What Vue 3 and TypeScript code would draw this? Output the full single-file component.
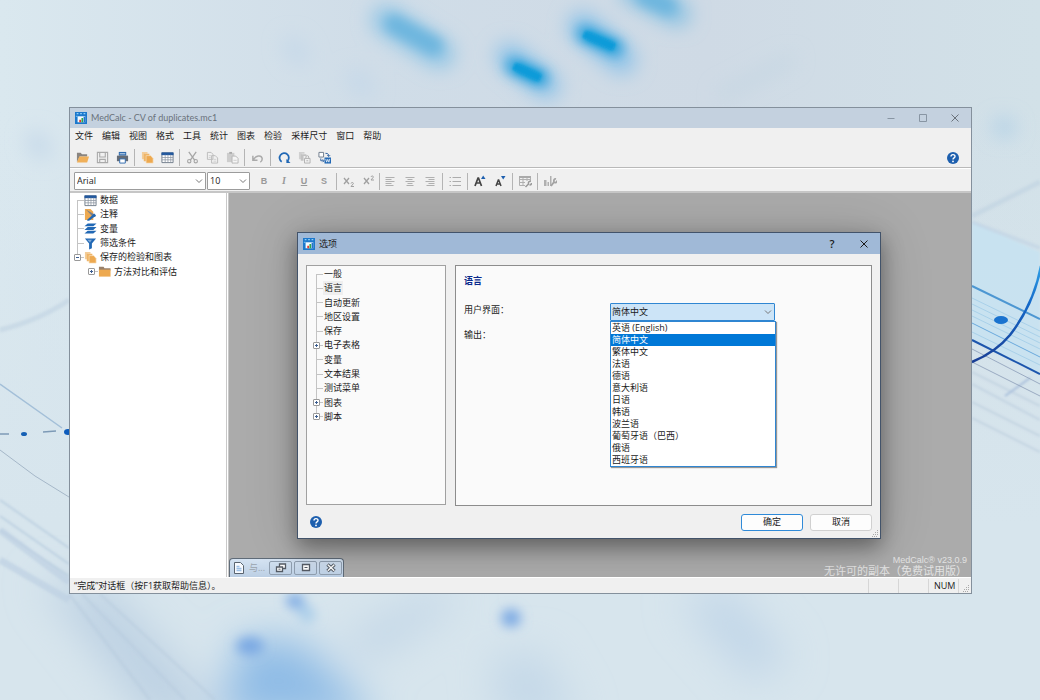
<script setup lang="ts">
import { ref } from 'vue'

type ToolItem = { id?: string; label?: string; sep?: 'wide' | 'thin' | 'mid' }
type TreeItem = { label: string; icon?: string; box?: 'plus' | 'minus'; child?: boolean; current?: boolean }

const menus = ['文件', '编辑', '视图', '格式', '工具', '统计', '图表', '检验', '采样尺寸', '窗口', '帮助']

const tools: ToolItem[] = [
  { id: 'open', label: '打开' },
  { id: 'save', label: '保存' },
  { id: 'print', label: '打印' },
  { sep: 'mid' },
  { id: 'pages', label: '内容' },
  { id: 'grid', label: '数据' },
  { sep: 'mid' },
  { id: 'cut', label: '剪切' },
  { id: 'copy', label: '复制' },
  { id: 'paste', label: '粘贴' },
  { sep: 'mid' },
  { id: 'undo', label: '撤消' },
  { sep: 'wide' },
  { id: 'refresh', label: '重新计算' },
  { id: 'locked', label: '保存结果' },
  { id: 'word', label: '导出' },
]

const formats: ToolItem[] = [
  { id: 'bold', label: '粗体' },
  { id: 'italic', label: '斜体' },
  { id: 'underline', label: '下划线' },
  { id: 'strike', label: '删除线' },
  { sep: 'mid' },
  { id: 'sub', label: '下标' },
  { id: 'sup', label: '上标' },
  { sep: 'thin' },
  { id: 'left', label: '左对齐' },
  { id: 'center', label: '居中' },
  { id: 'right', label: '右对齐' },
  { sep: 'mid' },
  { id: 'list', label: '列表' },
  { sep: 'mid' },
  { id: 'bigger', label: '增大字号' },
  { id: 'smaller', label: '减小字号' },
  { sep: 'mid' },
  { id: 'gridtool', label: '表格格式' },
  { sep: 'mid' },
  { id: 'charttool', label: '图表格式' },
]

const glyphs: Record<string, string> = { bold: 'B', italic: 'I', underline: 'U', strike: 'S' }

const contents: TreeItem[] = [
  { label: '数据', icon: 'grid' },
  { label: '注释', icon: 'note' },
  { label: '变量', icon: 'layers' },
  { label: '筛选条件', icon: 'funnel' },
  { label: '保存的检验和图表', icon: 'pages', box: 'minus' },
  { label: '方法对比和评估', icon: 'folder', box: 'plus', child: true },
]

const sections: TreeItem[] = [
  { label: '一般' },
  { label: '语言', current: true },
  { label: '自动更新' },
  { label: '地区设置' },
  { label: '保存' },
  { label: '电子表格', box: 'plus' },
  { label: '变量' },
  { label: '文本结果' },
  { label: '测试菜单' },
  { label: '图表', box: 'plus' },
  { label: '脚本', box: 'plus' },
]

const languages = ['英语 (English)', '简体中文', '繁体中文', '法语', '德语', '意大利语', '日语', '韩语', '波兰语', '葡萄牙语（巴西）', '俄语', '西班牙语']
const language = ref('简体中文')
const output = ref('简体中文')
</script>

<template>
  <div class="scene">
    <svg class="backdrop" viewBox="0 0 1040 700" preserveAspectRatio="xMidYMid slice" aria-hidden="true">
      <defs>
        <filter id="b3" filterUnits="userSpaceOnUse" x="-60" y="-60" width="1160" height="820"><feGaussianBlur stdDeviation="3" /></filter>
        <filter id="b6" filterUnits="userSpaceOnUse" x="-60" y="-60" width="1160" height="820"><feGaussianBlur stdDeviation="6" /></filter>
        <filter id="b9" filterUnits="userSpaceOnUse" x="-60" y="-60" width="1160" height="820"><feGaussianBlur stdDeviation="10" /></filter>
        <filter id="b20" filterUnits="userSpaceOnUse" x="-60" y="-60" width="1160" height="820"><feGaussianBlur stdDeviation="20" /></filter>
        <filter id="b1" filterUnits="userSpaceOnUse" x="-60" y="-60" width="1160" height="820"><feGaussianBlur stdDeviation="1" /></filter>
        <linearGradient id="sky" x1="0" y1="0" x2="1" y2="0">
          <stop offset="0" stop-color="#dae8ef" /><stop offset=".35" stop-color="#d0dde8" />
          <stop offset=".68" stop-color="#cfdae5" /><stop offset="1" stop-color="#d2e1e8" />
        </linearGradient>
        <linearGradient id="floor" x1="0" y1="0" x2="0" y2="1">
          <stop offset=".15" stop-color="#d8e6ee" stop-opacity="0" /><stop offset=".75" stop-color="#d7e5ed" />
        </linearGradient>
        <linearGradient id="curve" x1="0" y1="1" x2="0" y2="0">
          <stop offset="0" stop-color="#1a3f96" /><stop offset=".6" stop-color="#1468c8" /><stop offset="1" stop-color="#2fa0e6" />
        </linearGradient>
      </defs>
      <rect width="1040" height="700" fill="url(#sky)" />
      <rect width="1040" height="700" fill="url(#floor)" />
      <g filter="url(#b9)" stroke-linecap="round" fill="none">
        <path d="M386 20L440 54" stroke="#8ec4e5" stroke-width="28" />
        <path d="M509 56L547 86" stroke="#8fc3e8" stroke-width="26" />
        <path d="M582 26L622 60" stroke="#8fc3e8" stroke-width="28" />
        <path d="M632-10L678 14" stroke="#85c0e2" stroke-width="24" />
        <path d="M292 46L300 56M355 78L365 88M35 140L42 150" stroke="#c5d8e9" stroke-width="18" />
        <path d="M722 95L790 60" stroke="#c3d5e2" stroke-width="9" />
        <path d="M1002 127L1006 128" stroke="#a8cce6" stroke-width="16" />
      </g>
      <g filter="url(#b6)" stroke-linecap="round">
        <path d="M514 66L540 78M585 34L615 48" stroke="#3aa6dc" stroke-width="18" />
        <path d="M394 24L434 46M645-4L668 6" stroke="#6cb5de" stroke-width="18" />
      </g>
      <path d="M516 67L540 78M586 35L614 47" stroke="#0a9bd9" stroke-width="9" filter="url(#b3)" />
      <path d="M514 66L540 78M584 34L614 47" stroke="#0a9bd9" stroke-width="7" filter="url(#b1)" />
      <g filter="url(#b20)">
        <path d="M220 720L240 640L300 640L380 720z" fill="#8fbce6" />
        <path d="M40 580L110 590L230 720L150 720z" fill="#bdd1e3" />
        <path d="M680 600L730 590L790 660L750 680z" fill="#c1d6e8" />
        <path d="M340 640L440 590L460 600L370 660z" fill="#c0d4e6" />
        <path d="M490 660L540 650L580 720L500 720z" fill="#c4d8e8" />
      </g>
      <g filter="url(#b6)" fill="#78a7e3">
        <ellipse cx="250" cy="646" rx="14" ry="9" /><ellipse cx="295" cy="601" rx="9" ry="7" />
        <ellipse cx="511" cy="618" rx="10" ry="9" />
        <path d="M300 606L312 620" stroke="#a9cdea" stroke-width="14" />
      </g>
      <g filter="url(#b1)" fill="none">
        <path d="M972 222L1040 252V374L972 340z" fill="#c4e1f2" opacity=".75" />
        <path d="M972 216L1040 182M0 330Q40 320 69 300" stroke="#bccfe0" stroke-width="5" opacity=".5" />
        <path d="M972 222L1040 248" stroke="#c0d2e4" stroke-width="4" opacity=".6" />
        <path d="M0 500L69 548M0 516L69 564M0 530L69 576" stroke="#aec5da" stroke-width="2" opacity=".6" />
        <path d="M69 594L150 700M82 594L185 700M100 594L215 700" stroke="#b4c9dc" stroke-width="3" opacity=".4" />
        <path d="M0 530L69 582M0 560L69 600" stroke="#bdd0e2" stroke-width="7" opacity=".7" />
        <path d="M972 372L1040 406M972 384L1040 420M972 402L1040 436M972 418L1040 452" stroke="#b6c7dc" stroke-width="2" opacity=".5" />
        <path d="M1005 396L1030 378" stroke="#a9bfdb" stroke-width="2" />
      </g>
      <g fill="none">
        <path d="M972 298L1040 331M972 304L1040 337M972 310L1040 343M972 316L1040 349M972 332L1040 365" stroke="#94c4e4" opacity=".6" />
        <path d="M972 323L1040 357" stroke="#6aa9dc" />
        <path d="M972 286L1040 319" stroke="#4d97d2" stroke-width="2" />
        <path d="M972 340L1040 374" stroke="#1c55ad" stroke-width="2" />
        <path d="M972 349L1040 384M972 362L1040 396" stroke="#8b9cb8" opacity=".8" />
        <path d="M972 362Q996 352 1010 335Q1034 304 1041 266" stroke="url(#curve)" stroke-width="2.500" />
        <ellipse cx="1001" cy="320" rx="7" ry="4" fill="#1a73cf" />
        <path d="M0 384L62 428" stroke="#a3bfd8" stroke-width="1.500" />
        <path d="M0 450L35 476L69 497" stroke="#a5b7c8" />
        <path d="M0 434H9M43 432L56 431" stroke="#7d9ab6" stroke-width="1.500" />
        <ellipse cx="24" cy="434" rx="3" ry="2" fill="#1660b4" /><ellipse cx="68" cy="432" rx="4" ry="3" fill="#0d5cbc" />
      </g>
    </svg>

    <svg class="symbols" aria-hidden="true">
      <defs>
        <symbol id="i-app" viewBox="0 0 14 14">
          <path d="M0 0h14v14H0z" fill="#1c78cc" /><path d="M2 2h2M6 2h2M10 2h2" stroke="#8fd0fa" stroke-width="1.500" />
          <path d="M3 5h9v7H3z" fill="#f4fbff" /><path d="M1 5h2" stroke="#8fd0fa" />
          <path d="M5 9h2v3H5z" fill="#e23a2e" /><path d="M7.500 7h2v5h-2z" fill="#2fa84a" /><path d="M10 5.500h2V12h-2z" fill="#2374c9" />
        </symbol>
        <symbol id="i-open" viewBox="0 0 14 14"><path d="M1 12V2h4l1.500 1.500H12V6H4z" fill="#8a8580" /><path d="M3.500 6H14l-2 6.500H1z" fill="#f0b05a" /></symbol>
        <symbol id="i-save" viewBox="0 0 14 14"><path d="M1.500 1.500h11v11h-11zM4 1.500v5h6v-5M4 12.500V9h6v3.500" fill="none" stroke="#aaa" stroke-width="1.200" /></symbol>
        <symbol id="i-print" viewBox="0 0 14 14"><path d="M3 1h8v4H3z" fill="#2d69ad" /><path d="M1 5h12v6H1z" fill="#646b75" /><path d="M4 8.500h6V13H4z" fill="#fff" stroke="#2d69ad" /><path d="M4 3h6" stroke="#dce9f6" /></symbol>
        <symbol id="i-pages" viewBox="0 0 14 14"><path d="M1 1h6v2H4v6H1z" fill="#f3cd99" /><path d="M3 3h6v2H6v6H3z" fill="#efb567" /><path d="M5.500 5h5L13 8v5H5.500z" fill="#eda950" stroke="#f8ddb6" stroke-width=".7" /></symbol>
        <symbol id="i-grid" viewBox="0 0 14 14"><path d="M1 2h12v10.500H1z" fill="#fff" stroke="#6e7a88" /><path d="M.5 1.500h13v3H.5z" fill="#22589e" /><path d="M1 7h12M1 9.500h12M4.500 4v8M7.500 4v8M10.500 4v8" stroke="#8b95a1" stroke-width=".8" /></symbol>
        <symbol id="i-cut" viewBox="0 0 14 14"><path d="M3 1l6.500 9M11 1L4.500 10" fill="none" stroke="#a6a6a6" stroke-width="1.400" /><circle cx="3.500" cy="11" r="1.800" fill="none" stroke="#a6a6a6" stroke-width="1.200" /><circle cx="10.500" cy="11" r="1.800" fill="none" stroke="#a6a6a6" stroke-width="1.200" /></symbol>
        <symbol id="i-copy" viewBox="0 0 14 14"><path d="M1.500 1.500h4l2 2V9h-6zM6 5h4l2.500 2.500V13H6z" fill="#f0f0f0" stroke="#bbb" /><path d="M3 5h3M3 7h2M8 9h3M8 11h3" stroke="#d0d0d0" /></symbol>
        <symbol id="i-paste" viewBox="0 0 14 14"><path d="M1 2h8v10H1z" fill="#cdcdcd" /><path d="M3.500 1h3v2h-3z" fill="#aaa" /><path d="M6.500 5.500h4l2.500 2.500v5H6.500z" fill="#f5f5f5" stroke="#b5b5b5" /><path d="M8 10h3.500" stroke="#ccc" /></symbol>
        <symbol id="i-undo" viewBox="0 0 14 14"><path d="M2 5v5h5M2.500 9.500C5 5 11 3.500 12 8c.2 2-.8 3.500-2 4" fill="none" stroke="#aaa" stroke-width="1.600" /></symbol>
        <symbol id="i-refresh" viewBox="0 0 14 14"><path d="M4 11.500A5 5 0 1 1 10 11" fill="none" stroke="#2168b5" stroke-width="1.900" /><path d="M9 8.500V13h4.500z" fill="#2168b5" /></symbol>
        <symbol id="i-locked" viewBox="0 0 14 14"><path d="M1 1h6v2H4v6H1z" fill="#d0d0d0" /><path d="M3 3.500h6v2H6v5H3z" fill="#c2c2c2" /><path d="M7 8h6v5H7z" fill="#f0f0f0" stroke="#b0b0b0" /><path d="M8.500 8V6.500a1.500 1.500 0 0 1 3 0V8M9 10.500h2" fill="none" stroke="#b0b0b0" /></symbol>
        <symbol id="i-word" viewBox="0 0 14 14"><path d="M1 1.500h5v5H1z" fill="#fff" stroke="#6b7889" /><path d="M8 2.500c3 0 3.500 1 3.500 3M10 4.500l1.500 1.500L13 4.500M3 8v2.500h3M5 9l1.500 1.500L5 12" fill="none" stroke="#2a5e9e" /><path d="M7 7h7v6.500H7z" fill="#2168b5" /><path d="M8.300 8.500l1 3.500 1.200-3 1.200 3 1-3.500" fill="none" stroke="#fff" stroke-width=".8" /></symbol>
        <symbol id="i-help" viewBox="0 0 14 14"><circle cx="7" cy="7" r="6" fill="#1d5fae" /><path d="M5 5.600c0-2.600 4-2.600 4-.2 0 1.500-2 1.400-2 3.100" fill="none" stroke="#fff" stroke-width="1.400" /><circle cx="7" cy="10.400" r=".9" fill="#fff" /></symbol>
        <symbol id="i-sub" viewBox="0 0 14 14"><path d="M2 4l5 6M7 4l-5 6" stroke="#a0a0a0" stroke-width="1.300" /><path d="M9 9.500c.3-1.500 2.700-1.200 2.300.2L9 12.500h3" fill="none" stroke="#a0a0a0" /></symbol>
        <symbol id="i-sup" viewBox="0 0 14 14"><path d="M2 4l5 6M7 4l-5 6" stroke="#a0a0a0" stroke-width="1.300" /><path d="M9 3c.3-1.500 2.700-1.200 2.300.2L9 6h3" fill="none" stroke="#a0a0a0" /></symbol>
        <symbol id="i-left" viewBox="0 0 14 14"><path d="M2.500 3.500h9M2.500 5.500h6M2.500 7.500h9M2.500 9.500h6M2.500 11.500h8" stroke="#b0b0b0" /></symbol>
        <symbol id="i-center" viewBox="0 0 14 14"><path d="M2.500 3.500h9M4.500 5.500h5M2.500 7.500h9M4.500 9.500h5M3.500 11.500h7" stroke="#b0b0b0" /></symbol>
        <symbol id="i-right" viewBox="0 0 14 14"><path d="M2.500 3.500h9M5.500 5.500h6M2.500 7.500h9M5.500 9.500h6M3.500 11.500h8" stroke="#b0b0b0" /></symbol>
        <symbol id="i-list" viewBox="0 0 14 14"><path d="M4.500 3.500H13M4.500 7.500H13M4.500 11.500H13M1.500 3.500h1.500M1.500 7.500h1.500M1.500 11.500h1.500" stroke="#acacac" stroke-width="1.200" /></symbol>
        <symbol id="i-bigger" viewBox="0 0 14 14"><path d="M2 12L5 4h.5l3 8M3 9h4.500" fill="none" stroke="#444" stroke-width="1.700" /><path d="M8 5l2.200-3.500L12.500 5z" fill="#1d5fae" /></symbol>
        <symbol id="i-smaller" viewBox="0 0 14 14"><path d="M3 12l2.300-6h.4L8 12M4 10h3.500" fill="none" stroke="#444" stroke-width="1.500" /><path d="M8 2l2.200 3.500L12.500 2z" fill="#1d5fae" /></symbol>
        <symbol id="i-gridtool" viewBox="0 0 14 14"><path d="M1.500 2.500h11V8M1.500 2.500v9H7M1.500 5.500h11M1.500 8.500H7M5 3v8M9 3v4" fill="none" stroke="#b0b0b0" /><path d="M1 2h12v2H1z" fill="#aaa" /><path d="M7.500 13l3-3c-.5-2 1-3 2-2.500M13.500 9c0 1.500-1 2-2 2" fill="none" stroke="#999" stroke-width="1.500" /></symbol>
        <symbol id="i-charttool" viewBox="0 0 14 14"><path d="M1 6h2.500v6H1zM4.500 8H6v4H4.500zM7 2h1.500v10H7z" fill="#b0b0b0" /><path d="M8 12l3-4c-.5-2 .5-3.500 2-3M14 6.500c0 1.500-1 2.500-2.500 2" fill="none" stroke="#a3a3a3" stroke-width="1.800" /></symbol>
        <symbol id="i-note" viewBox="0 0 14 14"><path d="M1 1h6l3 3v9H1z" fill="#eda950" /><path d="M2 1.500l9.500 5.500 1 2.500-2.500.5z" fill="#7c7f86" /><path d="M4 12l7-6 2 2-7 5.500-2.500.5z" fill="#2168b5" /></symbol>
        <symbol id="i-layers" viewBox="0 0 14 14"><path d="M4 1.500h9.500L10 4.500H.5zM4 5.500h9.500L10 8.500H.5zM4 9.500h9.500L10 12.500H.5z" fill="#2168b5" /></symbol>
        <symbol id="i-funnel" viewBox="0 0 14 14"><path d="M1 1.500h12L8.500 7v5l-3 1.500V7z" fill="#2168b5" /><path d="M3.500 3h5L6.500 6z" fill="#7fa9d6" /></symbol>
        <symbol id="i-folder" viewBox="0 0 14 14"><path d="M1 2h5l1 1.500h6.500V6H1z" fill="#98806a" /><path d="M1 5h12.500v7.500H1z" fill="#eda950" /></symbol>
        <symbol id="i-down" viewBox="0 0 10 10"><path d="M2 3.500l3 3 3-3" fill="none" stroke="#777" /></symbol>
        <symbol id="i-min" viewBox="0 0 10 10"><path d="M1.500 5.500h7" stroke="#8895a3" /></symbol>
        <symbol id="i-max" viewBox="0 0 10 10"><path d="M1.500 1.500h7v7h-7z" fill="none" stroke="#8895a3" /></symbol>
        <symbol id="i-close" viewBox="0 0 10 10"><path d="M1.500 1.500l7 7M8.500 1.500l-7 7" stroke="currentColor" /></symbol>
        <symbol id="i-grip" viewBox="0 0 8 8"><path d="M6 1h1v1H6zM4 3h1v1H4zM6 3h1v1H6zM2 5h1v1H2zM4 5h1v1H4zM6 5h1v1H6zM1 7h1v1H1zM3 7h1v1H3zM5 7h1v1H5z" fill="#aaa" /></symbol>
        <symbol id="i-doc" viewBox="0 0 12 12"><path d="M1.500.5h6L10.500 3.500v8h-9z" fill="#f8fbff" stroke="#5a6470" /><path d="M3.500 4.500h3M3.500 6.500h5M3.500 8.500h5" stroke="#9dc0e6" stroke-width="1.400" /></symbol>
        <symbol id="i-restore" viewBox="0 0 12 12"><path d="M4.500 2h6v4.500h-6z" fill="#fff" stroke="#555c66" stroke-width="1.300" /><path d="M1.500 5h6v4.500h-6z" fill="#fff" stroke="#555c66" stroke-width="1.300" /><path d="M3.500 7.200h2" stroke="#555c66" /></symbol>
        <symbol id="i-tabmax" viewBox="0 0 12 12"><path d="M2.500 2.500h7v6h-7z" fill="#fff" stroke="#555c66" stroke-width="1.300" /><path d="M4.500 5.500h3" stroke="#555c66" /></symbol>
        <symbol id="i-tabclose" viewBox="0 0 12 12"><path d="M2.500 2.500l7 6.500M9.500 2.500l-7 6.500" stroke="#555c66" stroke-width="3.400" /><path d="M2.800 2.800l6.400 6M9.200 2.800l-6.400 6" stroke="#fff" stroke-width="1.400" /></symbol>
      </defs>
    </svg>

    <main class="window">
      <header class="titlebar">
        <svg class="logo"><use href="#i-app" /></svg>
        <h1>MedCalc - CV of duplicates.mc1</h1>
        <button class="caption" aria-label="最小化"><svg class="s10"><use href="#i-min" /></svg></button>
        <button class="caption" aria-label="最大化"><svg class="s10"><use href="#i-max" /></svg></button>
        <button class="caption" aria-label="关闭"><svg class="s10"><use href="#i-close" /></svg></button>
      </header>

      <nav class="menubar">
        <button v-for="m in menus" :key="m">{{ m }}</button>
      </nav>

      <div class="toolbar">
        <template v-for="(t, i) in tools" :key="i">
          <span v-if="t.sep" class="sep" :class="t.sep"></span>
          <button v-else class="tool" :aria-label="t.label"><svg class="s13"><use :href="'#i-' + t.id" /></svg></button>
        </template>
        <button class="tool help" aria-label="帮助"><svg class="s14"><use href="#i-help" /></svg></button>
      </div>

      <div class="formatbar">
        <span class="combo font">
          <select aria-label="字体"><option>Arial</option></select>
          <svg class="s10"><use href="#i-down" /></svg>
        </span>
        <span class="combo size">
          <select aria-label="字号"><option>10</option></select>
          <svg class="s10"><use href="#i-down" /></svg>
        </span>
        <template v-for="(t, i) in formats" :key="i">
          <span v-if="t.sep" class="sep" :class="t.sep"></span>
          <button v-else class="tool" :aria-label="t.label">
            <span v-if="t.id && glyphs[t.id]" class="glyph" :class="t.id">{{ glyphs[t.id] }}</span>
            <svg v-else class="s14"><use :href="'#i-' + t.id" /></svg>
          </button>
        </template>
      </div>

      <div class="body">
        <aside class="sidebar">
          <ul class="tree contents">
            <li v-for="(n, i) in contents" :key="n.label" :class="{ child: n.child }">
              <span class="guide" :class="{ first: i === 0, last: i === 4, only: n.child }"><i v-if="n.box" class="box" :class="n.box"></i></span>
              <svg class="s13"><use :href="'#i-' + n.icon" /></svg>
              <span class="label">{{ n.label }}</span>
            </li>
          </ul>
        </aside>

        <section class="workspace">
          <div class="watermark">
            <p class="version">MedCalc® v23.0.9</p>
            <p class="trial">无许可的副本（免费试用版）</p>
          </div>

          <div class="tab">
            <svg class="s12"><use href="#i-doc" /></svg>
            <span class="tabname">与...</span>
            <button aria-label="还原"><svg class="s12"><use href="#i-restore" /></svg></button>
            <button aria-label="最大化"><svg class="s12"><use href="#i-tabmax" /></svg></button>
            <button aria-label="关闭"><svg class="s12"><use href="#i-tabclose" /></svg></button>
          </div>

          <div class="dialog" role="dialog" aria-labelledby="dlg-title">
            <header class="dlg-title">
              <svg class="logo"><use href="#i-app" /></svg>
              <h2 id="dlg-title">选项</h2>
              <button class="caption question" aria-label="帮助">?</button>
              <button class="caption" aria-label="关闭"><svg class="s10"><use href="#i-close" /></svg></button>
            </header>
            <div class="panels">
              <ul class="tree sections">
                <li v-for="(n, i) in sections" :key="n.label">
                  <span class="guide" :class="{ first: i === 0, last: i === sections.length - 1 }"><i v-if="n.box" class="box" :class="n.box"></i></span>
                  <span class="label" :class="{ current: n.current }">{{ n.label }}</span>
                </li>
              </ul>
              <div class="page">
                <h3>语言</h3>
                <div class="row">
                  <label for="ui-lang">用户界面：</label>
                  <div class="combo lang open">
                    <select id="ui-lang" v-model="language">
                      <option v-for="l in languages" :key="l">{{ l }}</option>
                    </select>
                    <svg class="s10"><use href="#i-down" /></svg>
                    <ul class="popup" role="listbox" aria-label="用户界面">
                      <li v-for="l in languages" :key="l" role="option" :aria-selected="l === language" :class="{ selected: l === language }" @click="language = l">{{ l }}</li>
                    </ul>
                  </div>
                </div>
                <div class="row">
                  <label for="out-lang">输出：</label>
                  <div class="combo lang">
                    <select id="out-lang" v-model="output">
                      <option v-for="l in languages" :key="l">{{ l }}</option>
                    </select>
                  </div>
                </div>
              </div>
            </div>
            <footer class="dlg-foot">
              <button class="tool" aria-label="帮助"><svg class="s14"><use href="#i-help" /></svg></button>
              <button class="push primary">确定</button>
              <button class="push">取消</button>
            </footer>
            <svg class="grip"><use href="#i-grip" /></svg>
          </div>
        </section>
      </div>

      <footer class="status">
        <span class="message">“完成”对话框（按F1获取帮助信息）。</span>
        <span class="cell"></span>
        <span class="cell"></span>
        <span class="cell">NUM</span>
        <span class="cell end"></span>
        <svg class="grip"><use href="#i-grip" /></svg>
      </footer>
    </main>
  </div>
</template>

<style>
body {
  margin: 0;
}
</style>

<style scoped>
.scene {
  position: relative;
  display: flex;
  box-sizing: border-box;
  min-height: 100vh;
  padding: 107px 68px 106px 69px;
  overflow: hidden;
  background: #d6e3ec;
  color: #1a1a1a;
  font: 9px/14px 'Open Sans', 'Noto Sans CJK SC', sans-serif;
}
.scene * {
  box-sizing: border-box;
}
.backdrop {
  position: absolute;
  inset: 0;
  width: 100%;
  height: 100%;
}
.symbols {
  position: absolute;
  width: 0;
  height: 0;
}
button,
select {
  margin: 0;
  padding: 0;
  border: 0;
  background: none;
  color: inherit;
  font: inherit;
}
h1,
h2,
h3,
p,
ul {
  margin: 0;
  padding: 0;
  font: inherit;
  list-style: none;
}
svg {
  display: block;
  flex: none;
}
.s10 {
  width: 10px;
  height: 10px;
}
.s12 {
  width: 12px;
  height: 12px;
}
.s13 {
  width: 13px;
  height: 13px;
}
.s14 {
  width: 14px;
  height: 14px;
}
.logo {
  width: 12px;
  height: 12px;
  margin-right: 4px;
}
.window {
  position: relative;
  display: flex;
  flex: 1;
  flex-direction: column;
  min-width: 0;
  border: 1px solid #84909c;
  background: #f0f0f0;
}
.titlebar {
  display: flex;
  align-items: center;
  height: 20px;
  padding-left: 5px;
  background: #c4d1df;
  color: #6a727b;
}
.titlebar h1,
.dlg-title h2 {
  flex: 1;
}
.titlebar h1 {
  font-family: Lato, sans-serif;
}
.caption {
  display: flex;
  align-items: center;
  justify-content: center;
  width: 32px;
  height: 20px;
}
.menubar {
  display: flex;
  gap: 9px;
  height: 15px;
  padding-left: 5px;
}
.toolbar {
  display: flex;
  align-items: center;
  height: 25px;
  padding: 5px 8px 0 2px;
  border-bottom: 1px solid #b9b9b9;
}
.formatbar {
  display: flex;
  align-items: center;
  height: 25px;
  padding: 2px 0 0 4px;
  border-top: 1px solid #fff;
  border-bottom: 2px solid #c6c6c6;
}
.tool {
  display: flex;
  flex: none;
  align-items: center;
  justify-content: center;
  width: 20px;
  height: 18px;
}
.help {
  margin-left: auto;
}
.sep {
  display: flex;
  flex: none;
  justify-content: center;
  width: 5px;
  height: 17px;
}
.sep::before {
  width: 1px;
  background: #b4b4b4;
  content: '';
}
.sep.wide {
  width: 7px;
}
.sep.thin {
  width: 1px;
}
.glyph {
  color: #999;
  font-family: 'Liberation Sans', sans-serif;
  font-weight: bold;
}
.glyph.italic {
  font-family: 'Liberation Serif', serif;
  font-size: 10px;
  font-style: italic;
}
.glyph.underline {
  text-decoration: underline;
}
.combo {
  position: relative;
  display: flex;
  align-items: center;
  height: 18px;
  border: 1px solid #9c9c9c;
  border-radius: 1px;
  background: #fff;
}
.combo select {
  width: 100%;
  height: 100%;
  padding-left: 2px;
  appearance: none;
  outline: 0;
}
.combo > svg {
  position: absolute;
  right: 1px;
  pointer-events: none;
}
.font {
  width: 132px;
  margin-right: 1px;
}
.size {
  width: 43px;
  margin-right: 4px;
}
.body {
  display: flex;
  flex: 1;
}
.sidebar {
  width: 159px;
  border-right: 3px double #c9c9c9;
  background: #fff;
}
.tree {
  display: grid;
  grid-auto-rows: 1fr;
}
.tree li {
  display: flex;
  align-items: center;
  white-space: nowrap;
}
.contents {
  height: 86px;
}
.contents .label {
  margin-left: 3px;
}
.child {
  padding-left: 14px;
}
.guide {
  display: flex;
  flex: none;
  align-items: center;
  justify-content: center;
  align-self: stretch;
  width: 14px;
  padding-left: 1px;
  background:
    linear-gradient(#c4c4c4, #c4c4c4) 7px 0 / 1px 100% no-repeat,
    linear-gradient(#c4c4c4, #c4c4c4) 7px 50% / 7px 1px no-repeat;
}
.guide.first {
  background-position:
    7px 100%,
    7px 50%;
  background-size:
    1px 50%,
    7px 1px;
}
.guide.last {
  background-size:
    1px 50%,
    7px 1px;
}
.guide.only {
  background-size:
    0 0,
    7px 1px;
}
.box {
  width: 7px;
  height: 7px;
  border: 1px solid #999;
  border-radius: 1px;
  background: linear-gradient(#3d5e90, #3d5e90) center / 3px 1px no-repeat #fff;
}
.box.plus {
  background:
    linear-gradient(#3d5e90, #3d5e90) center / 3px 1px no-repeat,
    linear-gradient(#3d5e90, #3d5e90) center / 1px 3px no-repeat,
    #fff;
}
.workspace {
  position: relative;
  flex: 1;
  overflow: hidden;
  background: #ababab;
}
.watermark {
  position: absolute;
  right: 4px;
  bottom: 0;
  color: #e2e2e2;
  font-family: 'Liberation Sans', 'Noto Sans CJK SC', sans-serif;
  line-height: 11px;
  text-align: right;
}
.version {
  font-size: 9px;
}
.trial {
  font-size: 11px;
}
.tab {
  position: absolute;
  bottom: 0;
  left: 0;
  display: flex;
  align-items: center;
  gap: 2px;
  height: 19px;
  padding: 0 1px 0 3px;
  border: 1px solid #5f6b78;
  border-bottom: 0;
  border-radius: 4px 4px 0 0;
  background: linear-gradient(#d5e3f2, #bccfe4);
}
.tabname {
  width: 20px;
  color: #9aa3ad;
  text-align: center;
}
.tab button {
  display: flex;
  align-items: center;
  justify-content: center;
  width: 23px;
  height: 14px;
  border: 1px solid #909fb0;
  border-radius: 2px;
}
.dialog {
  position: absolute;
  top: 39px;
  right: 90px;
  left: 68px;
  border: 1px solid #42536a;
  background: #f0f0f0;
  box-shadow:
    0 8px 20px rgba(0, 0, 0, 0.38),
    0 2px 50px rgba(0, 0, 0, 0.16);
}
.dlg-title {
  display: flex;
  align-items: center;
  height: 21px;
  padding-left: 5px;
  background: #a0b9d7;
}
.question {
  font-size: 11px;
  font-weight: 600;
}
.panels {
  display: flex;
  gap: 9px;
  min-height: 252px;
  padding: 11px 8px 0;
}
.sections {
  width: 140px;
  height: 240px;
  padding: 1px 0 80px 2px;
  border: 1px solid #a0a0a0;
  background: #fafafa;
}
.sections .label {
  padding: 0 1px;
}
.current {
  background: #efefef;
}
.page {
  flex: 1;
  padding: 8px;
  border: 1px solid #8c8c8c;
  background: #fafafa;
}
.page h3 {
  margin-bottom: 15px;
  color: #0a2a8c;
  font-weight: bold;
}
.row {
  display: grid;
  grid-template-columns: 146px 165px;
  margin-bottom: 7px;
}
.lang.open {
  z-index: 1;
  border-color: #2f86d2;
  background: #cce4f7;
}
.lang select {
  padding-left: 1px;
}
.popup {
  position: absolute;
  top: 17px;
  left: -1px;
  width: 166px;
  border: 1px solid #2f86d2;
  background: #fff;
  box-shadow: 1px 1px 1px rgba(0, 0, 0, 0.4);
  line-height: 12px;
}
.popup li {
  height: 12px;
  padding-left: 1px;
}
.popup .selected {
  background: #0078d7;
  color: #fff;
}
.dlg-foot {
  display: flex;
  align-items: center;
  gap: 7px;
  height: 32px;
  padding: 0 8px;
}
.dlg-foot .tool {
  margin-right: auto;
}
.push {
  width: 62px;
  height: 17px;
  border: 1px solid #d0d0d0;
  border-radius: 3px;
  background: #fdfdfd;
}
.push.primary {
  border-color: #2f8ad8;
}
.grip {
  position: absolute;
  right: 1px;
  bottom: 1px;
  width: 8px;
  height: 8px;
}
.status {
  display: flex;
  align-items: flex-end;
  height: 16px;
  padding-left: 4px;
  border-top: 1px solid #fff;
}
.message {
  flex: 1;
}
.cell {
  width: 30px;
  height: 14px;
  padding-left: 5px;
  border-left: 1px solid #d6d6d6;
}
.end {
  width: 13px;
}
</style>
